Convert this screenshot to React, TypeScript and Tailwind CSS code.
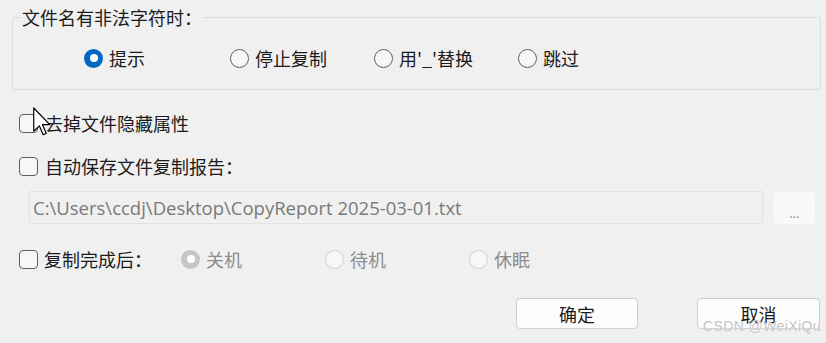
import React from "react";

const font = { fontFamily: '"Noto Sans CJK SC", "Noto Sans", sans-serif' };

function Radio({ checked, disabled }: { checked?: boolean; disabled?: boolean }) {
  if (checked && !disabled)
    return (
      <span className="flex h-[19px] w-[19px] shrink-0 items-center justify-center rounded-full bg-[#0067c0]">
        <span className="h-[8px] w-[8px] rounded-full bg-white" />
      </span>
    );
  if (checked && disabled)
    return (
      <span className="flex h-[19px] w-[19px] shrink-0 items-center justify-center rounded-full bg-[#c5c5c5]">
        <span className="h-[8px] w-[8px] rounded-full bg-white" />
      </span>
    );
  if (disabled)
    return <span className="h-[19px] w-[19px] shrink-0 rounded-full border border-[#cfcfcf] bg-[#f7f7f7]" />;
  return <span className="h-[19px] w-[19px] shrink-0 rounded-full border border-[#5f5f5f] bg-[#f7f7f7]" />;
}

function Check() {
  return <span className="h-[19px] w-[19px] shrink-0 rounded-[4px] border border-[#5f5f5f] bg-[#f7f7f7]" />;
}

function RadioItem({ label, checked, disabled, w }: { label: string; checked?: boolean; disabled?: boolean; w: string }) {
  return (
    <div className={`flex items-center gap-[6px] ${w}`}>
      <Radio checked={checked} disabled={disabled} />
      <span className={disabled ? "text-[#8c8c8c]" : "text-[#1b1b1b]"}>{label}</span>
    </div>
  );
}

export default function App() {
  return (
    <div
      className="relative h-[343px] w-[826px] overflow-hidden bg-[#f0f0f0] text-[18px] leading-[24px] text-[#1b1b1b]"
      style={font}
    >
      <fieldset className="mx-[12px] mr-[5px] mt-[5px] h-[85px] rounded-[2px] border border-[#dcdcdc] px-[8px]">
        <legend className="px-[1px] text-[18px] leading-[24px]">文件名有非法字符时：</legend>
        <div className="ml-[63px] mt-[17px] flex items-center">
          <RadioItem label="提示" checked w="w-[146px]" />
          <RadioItem label="停止复制" w="w-[144px]" />
          <RadioItem label="用'_'替换" w="w-[144px]" />
          <RadioItem label="跳过" w="w-[100px]" />
        </div>
      </fieldset>

      <div className="ml-[19px] mt-[21px] flex items-center gap-[7px]">
        <Check />
        <span>去掉文件隐藏属性</span>
      </div>

      <div className="ml-[19px] mt-[19px] flex items-center gap-[7px]">
        <Check />
        <span>自动保存文件复制报告：</span>
      </div>

      <div className="ml-[29px] mt-[13px] flex items-center gap-[11px]">
        <div
          className="flex h-[33px] w-[734px] items-center border border-[#e2e2e2] bg-[#f0f0f0] px-[3px] text-[18.5px] text-[#7a7a7a]"
          style={{ fontFamily: '"Open Sans", "Noto Sans", sans-serif' }}
        >
          C:\Users\ccdj\Desktop\CopyReport 2025-03-01.txt
        </div>
        <div className="flex h-[32px] w-[41px] items-end justify-center rounded-[4px] bg-[#f9f9f9] pb-[4px] text-[12px] leading-[14px] text-[#8a8a8a]">
          ...
        </div>
      </div>

      <div className="ml-[19px] mt-[23px] flex items-center">
        <div className="flex w-[162px] items-center gap-[6px]">
          <Check />
          <span>复制完成后：</span>
        </div>
        <RadioItem label="关机" checked disabled w="w-[144px]" />
        <RadioItem label="待机" disabled w="w-[144px]" />
        <RadioItem label="休眠" disabled w="w-[100px]" />
      </div>

      <div className="ml-[516px] mt-[27px] flex gap-[59px]">
        <div className="flex h-[31px] w-[122px] items-center justify-center rounded-[4px] border border-[#d0d0d0] bg-[#fdfdfd]">
          确定
        </div>
        <div className="flex h-[31px] w-[123px] items-center justify-center rounded-[4px] border border-[#d0d0d0] bg-[#fdfdfd]">
          取消
        </div>
      </div>

      <div
        className="absolute left-[703px] top-[318px] whitespace-nowrap text-[14px] leading-[16px] tracking-[0.4px] text-[#c4c4c4]"
        style={{ fontFamily: '"Liberation Sans", sans-serif', textShadow: "0 0 1px #ffffff" }}
      >
        CSDN @WeiXiQu
      </div>

      <svg className="absolute left-[33px] top-[107px]" width="18" height="29" viewBox="0 0 12 19">
        <path d="M0.5 0.5 L0.5 16 L4.2 12.4 L6.8 18.3 L8.8 17.4 L6.3 11.6 L11.2 11.6 Z" fill="#ffffff" stroke="#000000" strokeWidth="0.8" strokeLinejoin="round" />
      </svg>
    </div>
  );
}
